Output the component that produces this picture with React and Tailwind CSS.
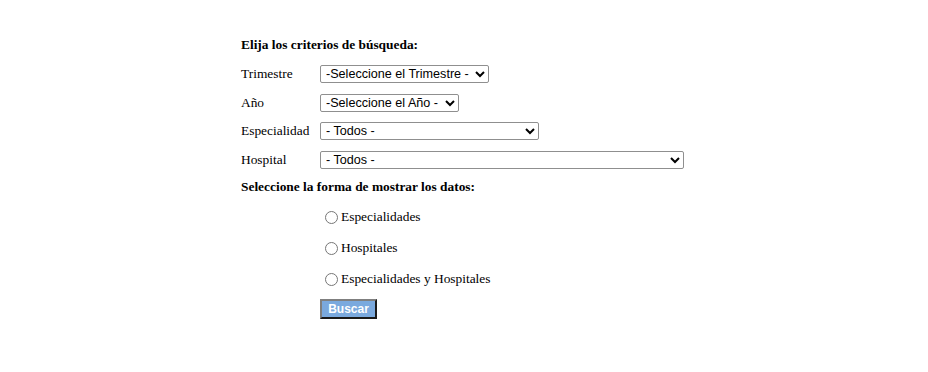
export default function App() {
  const serif = { fontFamily: '"Liberation Serif", "Times New Roman", serif' };
  const sel =
    "h-[18px] border border-[#8f8f8f] rounded-[2px] bg-white pl-[1px] text-[12.6px] text-black font-['Liberation_Sans',Arial,sans-serif]";
  const rows = [
    { label: "Trimestre", value: "-Seleccione el Trimestre -", w: "w-[169px]" },
    { label: "Año", value: "-Seleccione el Año -", w: "w-[139px]" },
    { label: "Especialidad", value: "- Todos -", w: "w-[219px]" },
    { label: "Hospital", value: "- Todos -", w: "w-[364px]" },
  ];
  const radios = ["Especialidades", "Hospitales", "Especialidades y Hospitales"];

  return (
    <div className="w-[928px] h-[372px] bg-white text-black" style={serif}>
      <div className="pl-[241px] pt-[37px] text-[13.4px]">
        {/* Criterios */}
        <div className="font-bold h-[16px] leading-[16px]">Elija los criterios de búsqueda:</div>
        <div className="mt-[12px] flex flex-col gap-[10.7px]">
          {rows.map((r) => (
            <div key={r.label} className="flex items-center h-[18px]">
              <span className="w-[79px]">{r.label}</span>
              <select className={`${sel} ${r.w}`} defaultValue={r.value}>
                <option>{r.value}</option>
              </select>
            </div>
          ))}
        </div>

        {/* Forma de mostrar */}
        <div className="font-bold mt-[10px] h-[16px] leading-[16px]">Seleccione la forma de mostrar los datos:</div>
        <div className="ml-[79px] mt-[14px] flex flex-col gap-[15px]">
          {radios.map((t) => (
            <label key={t} className="flex items-center h-[16px]">
              <input type="radio" name="forma" className="w-[13px] h-[13px] ml-[5px] mr-[3px] accent-[#767676]" />
              <span>{t}</span>
            </label>
          ))}
        </div>
        <div className="ml-[79px] mt-[12px]">
          <button className="h-[20px] w-[57px] bg-[#7aa9de] border-2 border-[#1a1a1a] border-t-[#7f7f7f] border-l-[#7f7f7f] text-white font-bold text-[12px] leading-[14px] font-['Liberation_Sans',Arial,sans-serif]">
            Buscar
          </button>
        </div>
      </div>
    </div>
  );
}
